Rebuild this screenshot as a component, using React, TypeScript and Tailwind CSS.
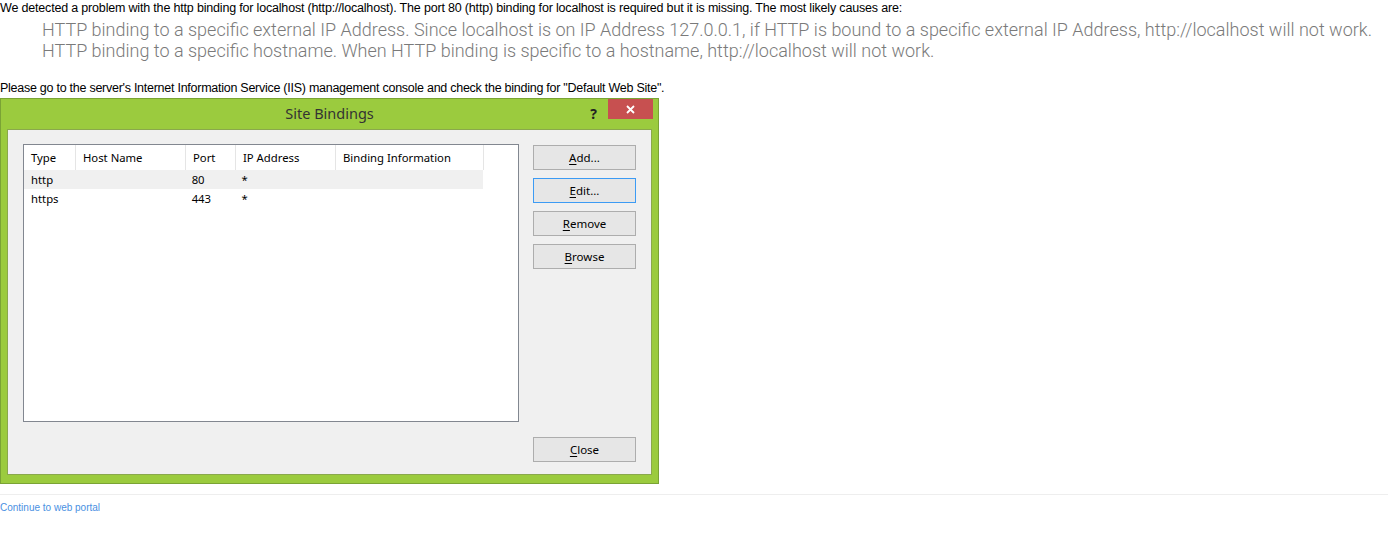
const dlgFont = { fontFamily: '"Noto Sans", "Open Sans", sans-serif' }
const smallFont = { fontFamily: '"Liberation Sans", Arial, sans-serif', letterSpacing: '-0.18px' }

const columns = [
  { label: 'Type', w: 'w-[52px]' },
  { label: 'Host Name', w: 'w-[110px]' },
  { label: 'Port', w: 'w-[50px]' },
  { label: 'IP Address', w: 'w-[100px]' },
  { label: 'Binding Information', w: 'w-[148px]' },
]

const rows = [
  { type: 'http', host: '', port: '80', ip: '*', info: '', sel: true },
  { type: 'https', host: '', port: '443', ip: '*', info: '', sel: false },
]

function DlgButton({ hot, rest, focused }: { hot: string; rest: string; focused?: boolean }) {
  return (
    <button
      type="button"
      className={`h-[25px] w-[103px] border bg-[#e6e6e6] text-[11.5px] text-black ${
        focused ? 'border-[#3c9bf4]' : 'border-[#adadad]'
      }`}
    >
      <span className="underline underline-offset-2">{hot}</span>
      {rest}
    </button>
  )
}

function SiteBindings() {
  return (
    <div className="w-[659px] border border-[#7aa335] bg-[#9bcb3e] px-[6px] pb-[8px]" style={dlgFont}>
      <div className="relative flex h-[30px] items-center justify-center">
        <span className="text-[14.5px] text-[#333]">Site Bindings</span>
        <span className="absolute right-[55px] top-[4px] text-[14px] font-bold text-[#222]">?</span>
        <span className="absolute right-[-1px] top-0 flex h-[20px] w-[45px] items-center justify-center bg-[#c75050]">
          <svg width="9" height="9" viewBox="0 0 9 9">
            <path d="M1 1L8 8M8 1L1 8" stroke="#fff" strokeWidth="1.8" />
          </svg>
        </span>
      </div>
      <div className="flex h-[346px] border border-[#8aa84c] bg-[#f0f0f0] pl-[15px] pr-[15px] pt-[14px]">
        <div className="h-[278px] w-[496px] border border-[#828790] bg-white">
          <div className="flex h-[25px]">
            {columns.map((c) => (
              <div key={c.label} className={`${c.w} flex items-center border-r border-[#e5e5e5] pl-[7px] pt-[1px] text-[11.3px] text-black`}>
                {c.label}
              </div>
            ))}
          </div>
          {rows.map((r) => (
            <div key={r.type} className={`flex h-[19px] w-[459px] items-center pt-[1px] text-[11.3px] text-black ${r.sel ? 'bg-[#f0f0f0]' : ''}`}>
              <div className="w-[52px] pl-[7px]">{r.type}</div>
              <div className="w-[110px] pl-[7px]">{r.host}</div>
              <div className="w-[50px] pl-[6px]">{r.port}</div>
              <div className="w-[100px] pl-[6px]">{r.ip}</div>
              <div className="w-[148px] pl-[7px]">{r.info}</div>
            </div>
          ))}
        </div>
        <div className="ml-[14px] flex flex-col pt-[1px]">
          <div className="flex flex-col gap-[8px]">
            <DlgButton hot="A" rest="dd..." />
            <DlgButton hot="E" rest="dit..." focused />
            <DlgButton hot="R" rest="emove" />
            <DlgButton hot="B" rest="rowse" />
          </div>
          <div className="mt-[167px]">
            <DlgButton hot="C" rest="lose" />
          </div>
        </div>
      </div>
    </div>
  )
}

export default function App() {
  return (
    <div className="min-h-[538px] bg-white">
      <p className="text-[12.5px] leading-[17px] text-black" style={smallFont}>
        We detected a problem with the http binding for localhost (http://localhost). The port 80 (http) binding for localhost is required but it is missing. The most likely causes are:
      </p>
      <ul className="mt-[2px] pl-[42px] text-[18px] font-light leading-[21px] text-[#7a7a7a]" style={{ fontFamily: 'Roboto, sans-serif' }}>
        <li>HTTP binding to a specific external IP Address. Since localhost is on IP Address 127.0.0.1, if HTTP is bound to a specific external IP Address, http://localhost will not work.</li>
        <li>HTTP binding to a specific hostname. When HTTP binding is specific to a hostname, http://localhost will not work.</li>
      </ul>
      <p className="mt-[19px] text-[12.5px] leading-[17px] text-black" style={{ ...smallFont, letterSpacing: '-0.26px' }}>
        Please go to the server's Internet Information Service (IIS) management console and check the binding for "Default Web Site".
      </p>
      <div className="mt-[1px]">
        <SiteBindings />
      </div>
      <div className="mt-[10px] border-t border-[#eeeeee] pt-[5px] text-[10px] leading-[14px]">
        <a href="#" className="text-[#4a90e2]" style={{ fontFamily: '"Liberation Sans", Arial, sans-serif' }}>
          Continue to web portal
        </a>
      </div>
    </div>
  )
}
